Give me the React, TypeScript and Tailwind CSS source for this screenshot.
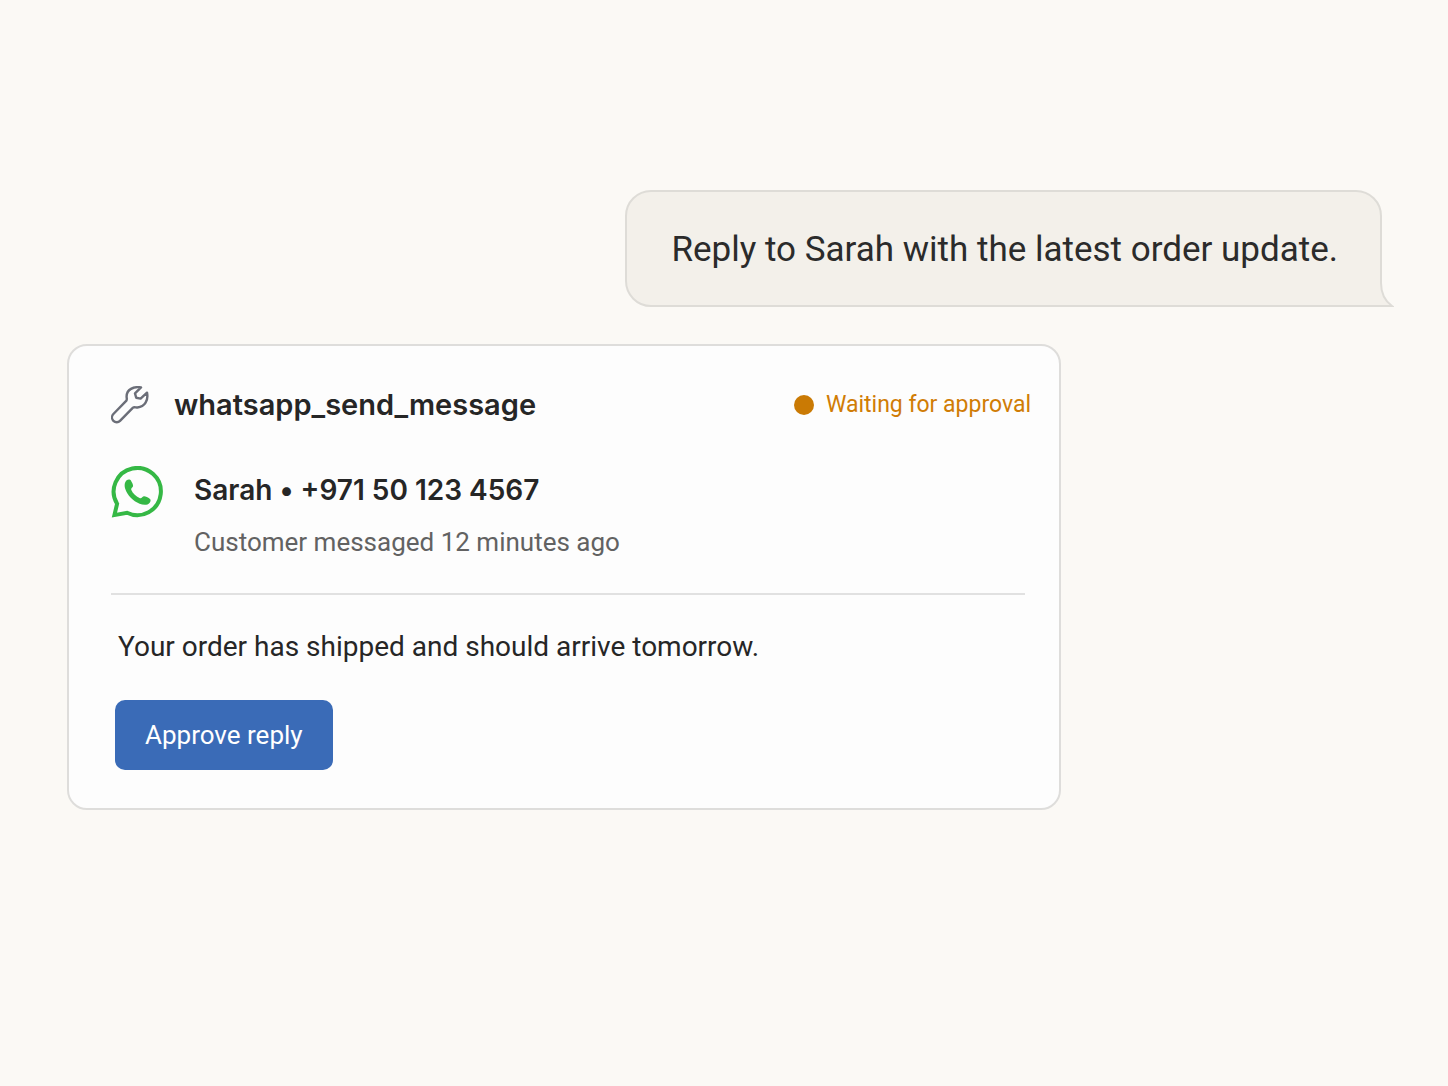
import React from "react";

function WrenchIcon() {
  return (
    <svg viewBox="0 0 38 38" className="size-[38px] shrink-0" fill="none" stroke="#6b6e78" strokeWidth="2.4" strokeLinejoin="round" strokeLinecap="round" aria-hidden="true">
      <path d="M30 1.4C22.5 .2 15.6 3.4 15.6 10.5C15.6 12 16.2 13.4 15.4 14.6L2.4 28C.6 29.9.6 33 2.4 34.8C4.3 36.7 7.2 36.7 9 34.8L22 21.6C23.2 20.7 25 21.6 26.5 21.5C33.8 20.9 37.6 14.2 36 6.6L29.6 12.6L25.2 11.8L24 7.4Z" />
    </svg>
  );
}

function WhatsAppIcon() {
  return (
    <svg viewBox="0 0 52 52" className="size-[52px] shrink-0" role="img" aria-label="WhatsApp">
      <path d="M3.4 49.1L6.1 37.8A23.6 23.6 0 1 1 16 46.8Z" fill="none" stroke="#35b845" strokeWidth="4" strokeLinejoin="miter" />
      <path d="M16 14.1C17.2 13.2 19.2 13.3 19.9 14.6C20.9 16.4 22.2 18.5 22.1 20C21.9 21.5 19.7 22.2 20.2 23.7C21.7 27.3 25.3 30.7 29 32.2C30.5 32.8 31.5 30.4 33.1 30.3C34.3 30.2 37.1 31.7 38.7 32.7C40.1 33.6 39.7 35.4 38.7 36.7C36.4 39.7 32 39.1 28.6 37.7C22 35 16.4 29.5 14.2 22.7C13.2 19.6 13.5 16 16 14.1Z" fill="#35b845" />
    </svg>
  );
}

function PromptBubble() {
  return (
    <div className="relative mr-[11px] self-end rounded-[26px] rounded-br-none border-2 border-[#dedcd7] bg-[#f3f0ea] pt-[33px] pr-[42px] pb-[31px] pl-11 font-['Roboto',sans-serif]">
      <p className="text-[35px] leading-[49px] text-[#2b2b2b]">Reply to Sarah with the latest order update.</p>
      <svg viewBox="0 0 14 28" className="absolute -right-[14px] -bottom-[2px] h-7 w-[14px]" aria-hidden="true">
        <path d="M0 2H1V4C1 15 5 22 12 27H0Z" fill="#f3f0ea" />
        <path d="M1 0V4C1 15 5 22 12 27H0" fill="none" stroke="#dedcd7" strokeWidth="2" />
      </svg>
    </div>
  );
}

function ApprovalCard() {
  return (
    <section className="w-full max-w-[994px] rounded-[20px] border-2 border-[#dedddb] bg-[#fdfdfd] pt-9 pr-7 pb-[38px] pl-[42px] font-['Roboto',sans-serif]">
      <header className="flex items-center justify-between">
        <div className="flex items-center gap-[25px]">
          <WrenchIcon />
          <h2 className="font-['Inter',sans-serif] text-[29px] leading-[46px] font-semibold text-[#262626]">whatsapp_send_message</h2>
        </div>
        <p className="flex items-center gap-3 text-[23px] leading-10 text-[#d07c05]">
          <span className="size-5 rounded-full bg-[#ca7a04]" />
          Waiting for approval
        </p>
      </header>

      <div className="mt-[38px] flex items-start gap-[31px]">
        <WhatsAppIcon />
        <div>
          <h3 className="font-['Inter',sans-serif] text-[28px] leading-[48px] font-semibold text-[#262626]">Sarah • +971 50 123 4567</h3>
          <p className="mt-2 text-[26px] leading-10 text-[#626262]">Customer messaged 12 minutes ago</p>
        </div>
      </div>

      <hr className="mt-[31px] mr-[6px] border-t-2 border-[#e1e1e1]" />

      <p className="mt-8 ml-[7px] text-[28px] leading-10 text-[#262626]">Your order has shipped and should arrive tomorrow.</p>
      <button type="button" className="mt-[33px] ml-1 block h-[70px] rounded-[10px] bg-[#3a6bb7] px-[30px] text-[26px] leading-10 text-white">
        Approve reply
      </button>
    </section>
  );
}

export default function App() {
  return (
    <main className="flex min-h-screen flex-col gap-[37px] bg-[#fbf9f5] pt-[190px] pr-[55px] pb-16 pl-[67px]">
      <PromptBubble />
      <ApprovalCard />
    </main>
  );
}
